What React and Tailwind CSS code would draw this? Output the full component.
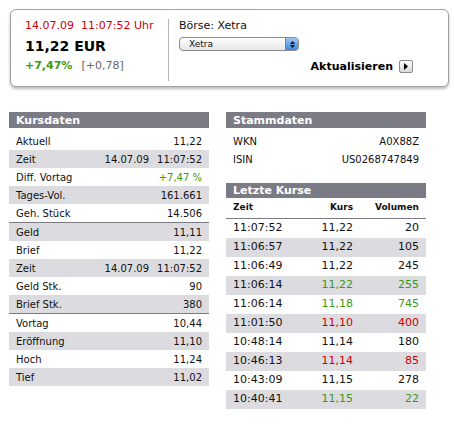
import React from 'react';

const font = { fontFamily: '"DejaVu Sans", Verdana, sans-serif' };

const kursdaten = [
  [
    ['Aktuell', '11,22'],
    ['Zeit', ['14.07.09', '11:07:52']],
    ['Diff. Vortag', '+7,47 %', 'green'],
    ['Tages-Vol.', '161.661'],
    ['Geh. Stück', '14.506'],
  ],
  [
    ['Geld', '11,11'],
    ['Brief', '11,22'],
    ['Zeit', ['14.07.09', '11:07:52']],
    ['Geld Stk.', '90'],
    ['Brief Stk.', '380'],
  ],
  [
    ['Vortag', '10,44'],
    ['Eröffnung', '11,10'],
    ['Hoch', '11,24'],
    ['Tief', '11,02'],
  ],
];

const kurse = [
  ['11:07:52', '11,22', '20', ''],
  ['11:06:57', '11,22', '105', ''],
  ['11:06:49', '11,22', '245', ''],
  ['11:06:14', '11,22', '255', 'green'],
  ['11:06:14', '11,18', '745', 'green'],
  ['11:01:50', '11,10', '400', 'red'],
  ['10:48:14', '11,14', '180', ''],
  ['10:46:13', '11,14', '85', 'red'],
  ['10:43:09', '11,15', '278', ''],
  ['10:40:41', '11,15', '22', 'green'],
];

const tone = (c) =>
  c === 'green' ? 'text-[#3a9a14]' : c === 'red' ? 'text-[#cc0000]' : 'text-[#111]';

function SectionHead({ title, className = '' }) {
  return (
    <div className={`bg-[#7b7b86] text-white font-bold text-[11px] leading-none flex items-center pl-[7px] ${className}`}>
      {title}
    </div>
  );
}

function KursdatenTable() {
  let idx = 0;
  return (
    <div className="w-[200px]">
      <SectionHead title="Kursdaten" className="h-[16px]" />
      <div className="h-[4px]" />
      {kursdaten.map((group, gi) => (
        <div key={gi} className={gi < kursdaten.length - 1 ? 'border-b border-[#7b7b86]' : ''}>
          {group.map(([label, value, color]) => {
            const striped = idx++ % 2 === 1;
            return (
              <div
                key={label + idx}
                className={`h-[18px] flex items-center justify-between px-[7px] text-[10px] text-[#111] ${striped ? 'bg-[#dcdce0]' : ''}`}
              >
                <span>{label}</span>
                {Array.isArray(value) ? (
                  <span className="flex gap-[8px]">
                    <span>{value[0]}</span>
                    <span>{value[1]}</span>
                  </span>
                ) : (
                  <span className={tone(color)}>{value}</span>
                )}
              </div>
            );
          })}
        </div>
      ))}
    </div>
  );
}

function RightColumn() {
  return (
    <div className="w-[200px]">
      <SectionHead title="Stammdaten" className="h-[16px]" />
      <div className="h-[4px]" />
      {[
        ['WKN', 'A0X88Z'],
        ['ISIN', 'US0268747849'],
      ].map(([l, v]) => (
        <div key={l} className="h-[18px] flex items-center justify-between px-[7px] text-[10px] text-[#111]">
          <span>{l}</span>
          <span>{v}</span>
        </div>
      ))}

      <SectionHead title="Letzte Kurse" className="h-[15px] mt-[15px]" />
      <div className="h-[21px] border-b border-[#7b7b86] flex items-center px-[7px] text-[9px] font-bold text-[#111]">
        <span className="w-[60px]">Zeit</span>
        <span className="w-[60px] text-right">Kurs</span>
        <span className="flex-1 text-right">Volumen</span>
      </div>
      {kurse.map(([t, k, v, c], i) => (
        <div
          key={i}
          className={`h-[19px] flex items-center px-[7px] text-[11px] text-[#111] ${i % 2 === 1 ? 'bg-[#dcdce0]' : ''}`}
        >
          <span className="w-[60px]">{t}</span>
          <span className={`w-[60px] text-right ${tone(c)}`}>{k}</span>
          <span className={`flex-1 text-right ${tone(c)}`}>{v}</span>
        </div>
      ))}
    </div>
  );
}

function QuoteBox() {
  return (
    <div className="ml-[1px] w-[439px] h-[78px] rounded-[6px] border border-[#a3a3a3] bg-white shadow-[0_2px_3px_rgba(0,0,0,0.28)] flex">
      <div className="w-[157px] pl-[14px] pt-[9px] flex flex-col">
        <div className="text-[11px] leading-[14px] text-[#cc0000] whitespace-pre">14.07.09  11:07:52 Uhr</div>
        <div className="mt-[4px] text-[14px] leading-[18px] font-bold text-black">11,22 EUR</div>
        <div className="mt-[4px] text-[11px] leading-[14px] flex gap-[9px]">
          <span className="font-bold text-[#3a9a14]">+7,47%</span>
          <span className="text-[#666]">[+0,78]</span>
        </div>
      </div>
      <div className="w-px h-[62px] mt-[9px] bg-[#b5b5b5]" />
      <div className="flex-1 pl-[10px] pt-[9px] flex flex-col">
        <div className="text-[11px] leading-[14px] text-[#111]">Börse: Xetra</div>
        <div className="mt-[4px] w-[120px] h-[14px] rounded-[4px] border border-[#8a8a8a] bg-gradient-to-b from-white to-[#e6e6e6] flex items-center overflow-hidden">
          <span className="flex-1 pl-[9px] text-[9px] leading-none text-[#111]">Xetra</span>
          <span className="w-[13px] h-full bg-gradient-to-b from-[#9ec6f2] to-[#3d86dc] border-l border-[#5b84b8] flex flex-col items-center justify-center gap-[1px]">
            <svg width="5" height="3" viewBox="0 0 5 3"><path d="M0 3 L2.5 0 L5 3 Z" fill="#111" /></svg>
            <svg width="5" height="3" viewBox="0 0 5 3"><path d="M0 0 L2.5 3 L5 0 Z" fill="#111" /></svg>
          </span>
        </div>
        <div className="mt-[9px] flex items-center justify-end pr-[35px] gap-[6px]">
          <span className="text-[11px] font-bold leading-none text-black">Aktualisieren</span>
          <span className="w-[14px] h-[13px] border border-[#8a8a8a] rounded-[2px] bg-gradient-to-b from-white to-[#d8d8d8] flex items-center justify-center">
            <svg width="4" height="7" viewBox="0 0 4 7"><path d="M0 0 L4 3.5 L0 7 Z" fill="#000" /></svg>
          </span>
        </div>
      </div>
    </div>
  );
}

export default function App() {
  return (
    <div className="w-[454px] h-[438px] bg-white pl-[9px] pt-[9px]" style={font}>
      <QuoteBox />
      <div className="mt-[25px] flex gap-[17px]">
        <KursdatenTable />
        <RightColumn />
      </div>
    </div>
  );
}
